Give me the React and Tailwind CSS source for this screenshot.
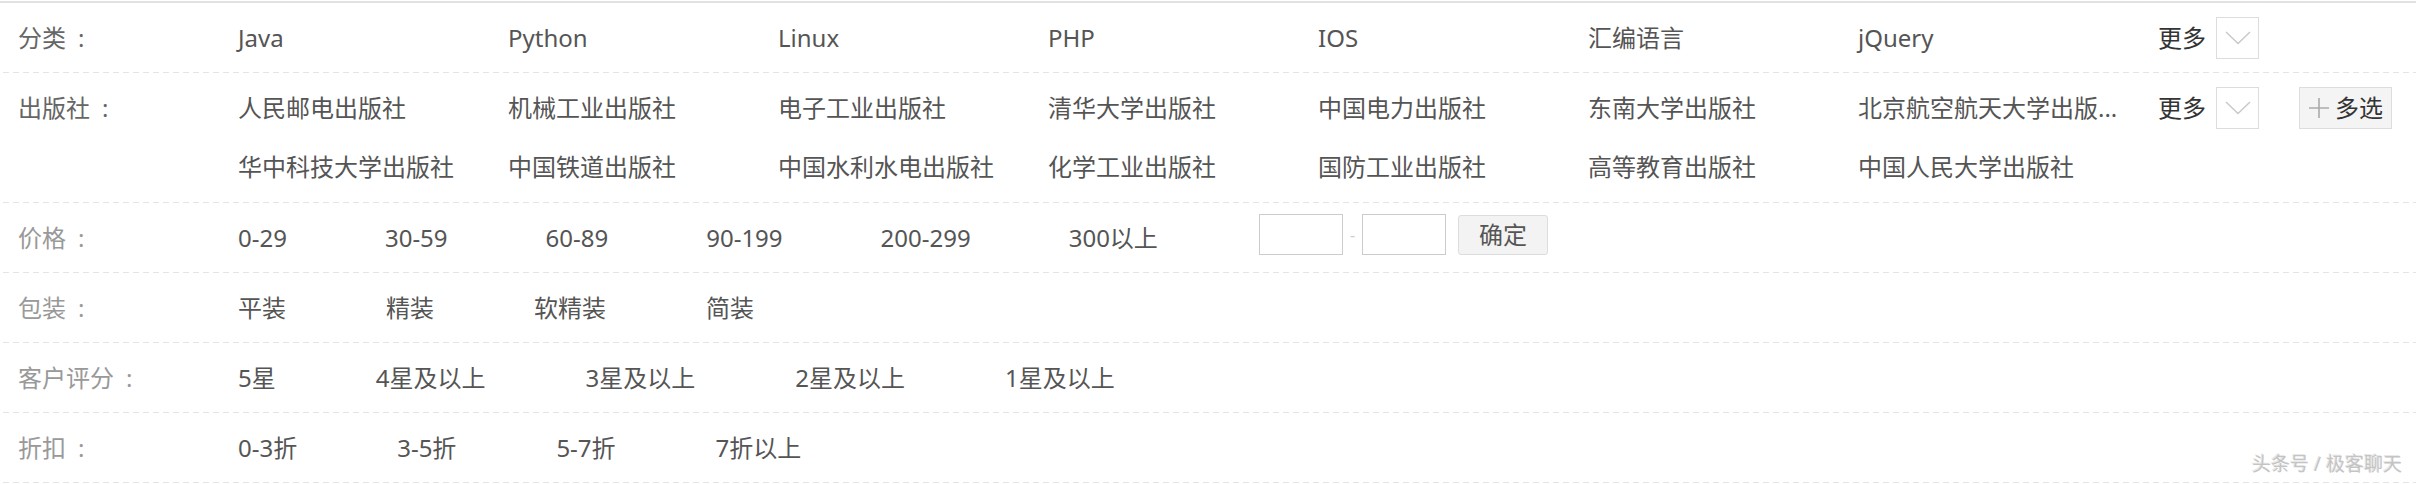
import React from "react";

const categories = ["Java", "Python", "Linux", "PHP", "IOS", "汇编语言", "jQuery"];

const publishers = [
    "人民邮电出版社",
    "机械工业出版社",
    "电子工业出版社",
    "清华大学出版社",
    "中国电力出版社",
    "东南大学出版社",
    "北京航空航天大学出版...",
    "华中科技大学出版社",
    "中国铁道出版社",
    "中国水利水电出版社",
    "化学工业出版社",
    "国防工业出版社",
    "高等教育出版社",
    "中国人民大学出版社",
];

const prices = ["0-29", "30-59", "60-89", "90-199", "200-299", "300以上"];
const bindings = ["平装", "精装", "软精装", "简装"];
const ratings = ["5星", "4星及以上", "3星及以上", "2星及以上", "1星及以上"];
const discounts = ["0-3折", "3-5折", "5-7折", "7折以上"];

const dashed =
    "bg-[linear-gradient(to_right,#e4e4e4_6px,transparent_6px)] bg-[length:10px_1px] bg-bottom bg-repeat-x";

function Row({ label, muted, tall, children }) {
    return (
        <div className={`flex items-start pt-[5px] ${tall ? "h-[130px]" : "h-[70px]"} ${dashed}`}>
            <div
                className={`w-[238px] shrink-0 pl-[18px] leading-[59px] ${
                    muted ? "text-[#999999]" : "text-[#666666]"
                }`}
            >
                {label}
                <span className="ml-[12px]">:</span>
            </div>
            {children}
        </div>
    );
}

function Chevron() {
    return (
        <div className="w-[43px] h-[42px] border border-[#dddddd] flex items-center justify-center">
            <svg width="26" height="14" viewBox="0 0 26 14" fill="none">
                <polyline points="1,1 13,12.5 25,1" stroke="#c8c8c8" strokeWidth="1.4" />
            </svg>
        </div>
    );
}

function More({ multi }) {
    return (
        <div className="flex items-center h-[59px] ml-[30px] mb-[4px]">
            <span className="text-[#333333]">更多</span>
            <div className="ml-[10px]">
                <Chevron />
            </div>
            {multi && (
                <button className="ml-[40px] w-[93px] h-[42px] bg-[#f4f4f4] border border-[#dddddd] flex items-center justify-center text-[#333333]">
                    <svg width="22" height="22" viewBox="0 0 22 22" className="mr-[5px]">
                        <path d="M11 1v20M1 11h20" stroke="#aaaaaa" strokeWidth="1.6" />
                    </svg>
                    多选
                </button>
            )}
        </div>
    );
}

function Inline({ items, gap = "gap-[100px]" }) {
    return (
        <div className={`flex items-center h-[59px] ${gap} text-[#555555]`}>
            {items.map((t) => (
                <span key={t} className="whitespace-nowrap">
                    {t}
                </span>
            ))}
        </div>
    );
}

export default function App() {
    return (
        <div className="relative w-[2416px] h-[484px] bg-white text-[24px] [font-family:'Noto_Sans','Noto_Sans_CJK_SC',sans-serif] overflow-hidden">
            <div className="mt-[1px] border-t-2 border-[#e2e2e2]">
                <Row label="分类">
                    <div className="grid grid-cols-7 w-[1890px] leading-[59px] text-[#555555]">
                        {categories.map((c) => (
                            <span key={c}>{c}</span>
                        ))}
                    </div>
                    <More />
                </Row>
                <Row label="出版社" tall>
                    <div className="grid grid-cols-7 w-[1890px] leading-[59px] text-[#555555]">
                        {publishers.map((p) => (
                            <span key={p} className="whitespace-nowrap">
                                {p}
                            </span>
                        ))}
                    </div>
                    <More multi />
                </Row>
                <Row label="价格" muted>
                    <div className="flex items-center h-[59px]">
                        <Inline items={prices} gap="gap-[98px]" />
                        <div className="flex items-center ml-[101px] mb-[6px]">
                            <input className="w-[84px] h-[41px] border border-[#cccccc] outline-none" />
                            <span className="mx-[7px] text-[#cccccc] text-[16px]">-</span>
                            <input className="w-[84px] h-[41px] border border-[#cccccc] outline-none" />
                            <button className="ml-[12px] w-[90px] h-[40px] bg-[#f3f3f3] border border-[#dddddd] rounded-[3px] text-[#555555]">
                                确定
                            </button>
                        </div>
                    </div>
                </Row>
                <Row label="包装" muted>
                    <Inline items={bindings} />
                </Row>
                <Row label="客户评分" muted>
                    <Inline items={ratings} />
                </Row>
                <Row label="折扣" muted>
                    <Inline items={discounts} />
                </Row>
            </div>
            <div className="absolute right-[14px] bottom-[6px] text-[19px] text-[#c4c4c4] [text-shadow:-1px_-1px_0_#e8e8e8]">
                头条号 / 极客聊天
            </div>
        </div>
    );
}
